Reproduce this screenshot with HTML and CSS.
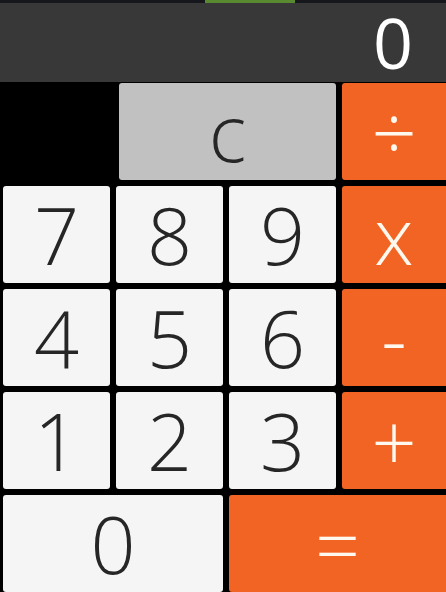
FILE: index.html
```html
<!DOCTYPE html>
<html lang="en">

<head>
    <meta charset="UTF-8">
    <meta name="viewport" content="width=device-width, initial-scale=1.0">
    <title>Calculator</title>
    <link rel="stylesheet" href="styles.css">
</head>

<body>

    <!-- Status strip with the active tab marker -->
    <div class="status-bar">
        <div class="status-marker"></div>
    </div>

    <!-- Result display -->
    <div class="display" id="display">0</div>

    <!-- Keypad -->
    <div class="keypad">
        <div class="blank"></div>
        <button class="key key-clear" onclick="clearAll()">c</button>
        <button class="key key-op" onclick="press('/')">÷</button>

        <button class="key" onclick="press('7')">7</button>
        <button class="key" onclick="press('8')">8</button>
        <button class="key" onclick="press('9')">9</button>
        <button class="key key-op" onclick="press('*')">x</button>

        <button class="key" onclick="press('4')">4</button>
        <button class="key" onclick="press('5')">5</button>
        <button class="key" onclick="press('6')">6</button>
        <button class="key key-op" onclick="press('-')">-</button>

        <button class="key" onclick="press('1')">1</button>
        <button class="key" onclick="press('2')">2</button>
        <button class="key" onclick="press('3')">3</button>
        <button class="key key-op" onclick="press('+')">+</button>

        <button class="key key-wide" onclick="press('0')">0</button>
        <button class="key key-op key-wide" onclick="calculate()">=</button>
    </div>

    <script>
        var expr = '';

        function show(value) {
            document.getElementById('display').innerText = value;
        }

        function press(ch) {
            expr += ch;
            show(expr);
        }

        function clearAll() {
            expr = '';
            show('0');
        }

        function calculate() {
            try {
                var result = Function('return (' + expr + ')')();
                expr = String(result);
                show(expr);
            } catch (e) {
                expr = '';
                show('Error');
            }
        }
    </script>
</body>

</html>
```

FILE: styles.css
```css
body, html {
    margin: 0;
    padding: 0;
    height: 100%;
    overflow: hidden;
}

body {
    background-color: #000;
    font-family: 'Open Sans', 'Noto Sans', sans-serif;
    font-weight: 300;
}

/* Thin strip at the top */
.status-bar {
    height: 3px;
    background-color: #15171c;
    display: flex;
}

.status-marker {
    width: 90px;
    margin-left: 205px;
    background-color: #5a8a30;
}

/* Display */
.display {
    height: 79px;
    background-color: #383838;
    color: #fff;
    font-size: 70px;
    font-weight: 400;
    line-height: 79px;
    text-align: right;
    padding-right: 33px;
}

/* Keypad grid */
.keypad {
    display: grid;
    grid-template-columns: 107px 107px 107px 1fr;
    grid-template-rows: repeat(5, 97px);
    gap: 6px;
    padding-left: 3px;
    margin-top: 1px;
}

.key {
    border: none;
    border-radius: 3px;
    background-color: #f5f5f5;
    color: #262626;
    font-family: inherit;
    font-weight: inherit;
    font-size: 79px;
    line-height: 1;
    padding: 0;
    cursor: pointer;
}

.key:active {
    background-color: #ddd;
}

.key-clear {
    grid-column: span 2;
    margin-left: 3px;
    background-color: #c1c1c1;
}

.key-op {
    background-color: #f26424;
    color: #fff8ee;
    border-radius: 3px 0 0 3px;
}

.key-op:active {
    background-color: #d9541a;
}

.key-wide {
    grid-column: span 2;
}
```
